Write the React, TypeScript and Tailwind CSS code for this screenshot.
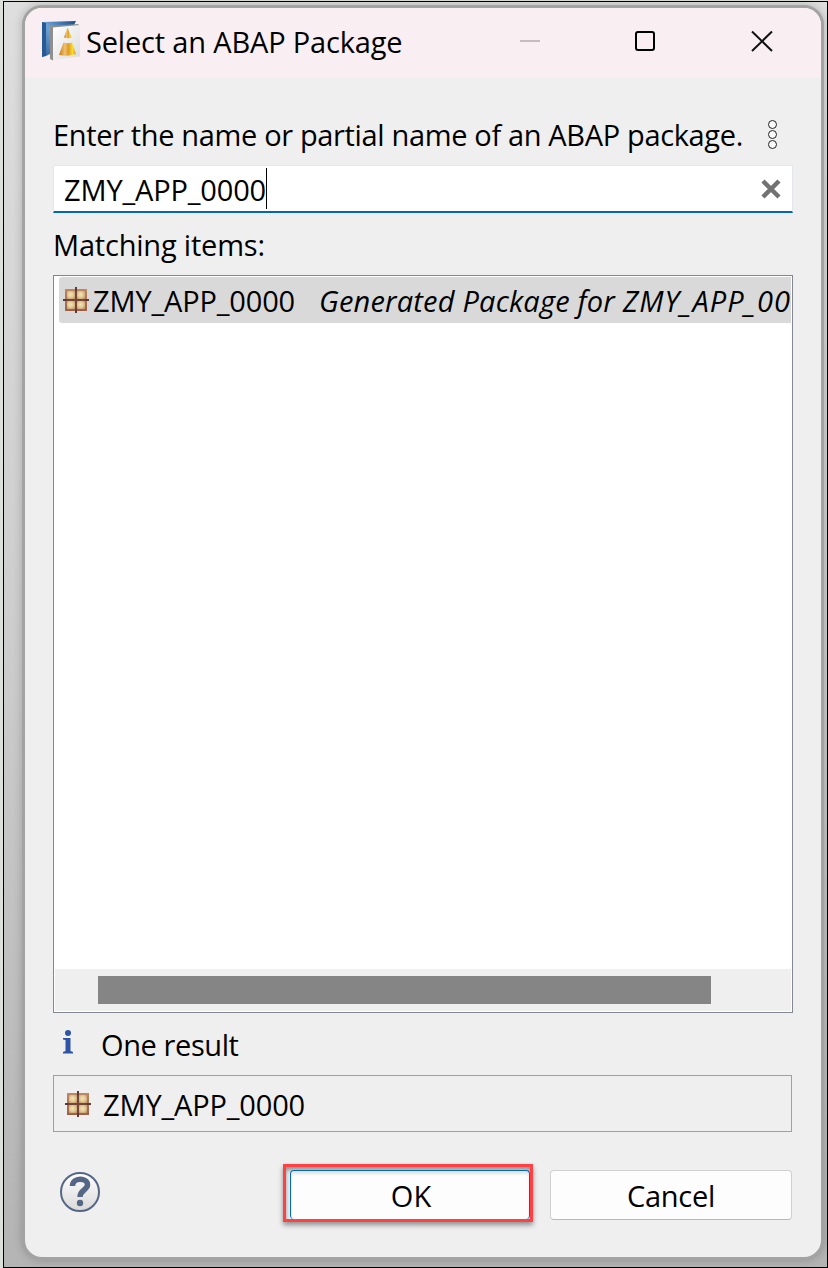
import React from 'react';

function PackageIcon() {
  return (
    <svg width="26" height="26" viewBox="0 0 26 26" className="shrink-0">
      <defs>
        <linearGradient id="box" x1="0" y1="0" x2="0" y2="1">
          <stop offset="0" stopColor="#c08760" />
          <stop offset="1" stopColor="#9c5f47" />
        </linearGradient>
        <radialGradient id="cell" cx=".45" cy=".45" r=".7">
          <stop offset="0" stopColor="#f3e4b2" />
          <stop offset=".5" stopColor="#e3cb98" />
          <stop offset="1" stopColor="#bd9068" />
        </radialGradient>
      </defs>
      <rect x="2" y="2" width="22" height="22" fill="url(#box)" />
      <rect x="4" y="4" width="8" height="8" fill="url(#cell)" />
      <rect x="14" y="4" width="8" height="8" fill="url(#cell)" />
      <rect x="4" y="14" width="8" height="8" fill="url(#cell)" />
      <rect x="14" y="14" width="8" height="8" fill="url(#cell)" />
      <path d="M13 2V24M2 13H24" stroke="#734638" strokeWidth="2" />
      <path d="M13 0V4M13 22V26M0 13H4M22 13H26" stroke="#5d3a36" strokeWidth="2" />
    </svg>
  );
}

function AbapIcon() {
  return (
    <svg width="38" height="40" viewBox="0 0 38 40" className="shrink-0">
      <defs>
        <linearGradient id="blue" x1="0" y1="1" x2="1" y2="0">
          <stop offset="0" stopColor="#2e5f98" />
          <stop offset=".5" stopColor="#6fa4d8" />
          <stop offset="1" stopColor="#174b88" />
        </linearGradient>
        <linearGradient id="gold">
          <stop offset="0" stopColor="#c27a16" />
          <stop offset=".35" stopColor="#f0c272" />
          <stop offset=".55" stopColor="#dc9c28" />
          <stop offset=".8" stopColor="#fbdc2c" />
          <stop offset="1" stopColor="#d8951c" />
        </linearGradient>
        <linearGradient id="sheet" x1="0" y1="0" x2="1" y2="1">
          <stop offset="0" stopColor="#ffffff" />
          <stop offset="1" stopColor="#dcdcdc" />
        </linearGradient>
      </defs>
      <path d="M0 1L34 0L30 8L8 33L4 35L0 36Z" fill="url(#blue)" />
      <path d="M0 1L4 2V34.500L0 36Z" fill="#285a94" />
      <path d="M8 5L36 3L38 5L12 8L11 39.500L8 38Z" fill="#8f8f8f" />
      <path d="M11 6.500L38 4V35.500L11 39Z" fill="url(#sheet)" />
      <path d="M25.500 6.500L29.500 16.500Q25.500 18 22 16.500Z" fill="url(#gold)" />
      <path d="M21.500 21.500Q25.500 23 30 21.500L34 33Q26 36 17 34Z" fill="url(#gold)" />
    </svg>
  );
}

export default function App() {
  return (
    <div className="h-[1268px] w-[828px] overflow-hidden bg-[#dcdfda] pt-px pl-[3px] font-['Open_Sans','Noto_Sans',sans-serif] text-[29px] leading-[40px] text-black">
      <div className="h-[1267px] w-[825px] border border-black bg-linear-to-b from-[#dedede] via-[#cdcdcd] to-[#b4b4b4] pt-[3px] pl-[18px]">
        <div className="h-[1255px] w-[802px] overflow-hidden rounded-[20px] border-3 border-[#a3a3a3] bg-[#efefef] shadow-[0_0_10px_rgba(0,0,0,0.2)]">
          <header className="flex h-[69px] items-start bg-[#f9eff3] pl-[17px]">
            <div className="flex w-[478px] shrink-0 items-start gap-[6px] pt-[13px]">
              <AbapIcon />
              <h1 className="pt-[1px] tracking-[-0.17px] whitespace-nowrap">Select an ABAP Package</h1>
            </div>
            <svg width="260" height="40" viewBox="0 0 260 40" className="mt-[13px]" fill="none">
              <path d="M0 20H20" stroke="#c4bcc0" strokeWidth="2" />
              <rect x="116" y="11" width="18" height="18" rx="2" stroke="#000" strokeWidth="2" />
              <path d="M232 10.500L252 30M252 10.500L232 30" stroke="#111" strokeWidth="2" />
            </svg>
          </header>
          <main className="pl-[28px]">
            <div className="flex h-[88px] w-[740px] items-start justify-between pt-[38px]">
              <label className="tracking-[-0.35px] whitespace-nowrap">Enter the name or partial name of an ABAP package.</label>
              <svg width="10" height="30" viewBox="0 0 10 30" className="mt-[5px] mr-[15px] shrink-0" fill="#fafafa" stroke="#222">
                <circle cx="4.500" cy="4.500" r="4" />
                <circle cx="4.500" cy="14.500" r="4" />
                <circle cx="4.500" cy="24.500" r="4" />
              </svg>
            </div>
            <div className="flex h-[48px] w-[740px] items-center border border-b-2 border-[#e3e7eb] border-b-[#0067c0] bg-white pl-[10px]">
              <span className="pt-[2px] tracking-[-0.15px] whitespace-nowrap">ZMY_APP_0000</span>
              <span className="h-[41px] w-px bg-black" />
              <svg width="20" height="20" viewBox="0 0 20 20" className="mr-[11px] ml-auto">
                <path d="M2 2L18 18M18 2L2 18" stroke="#727272" strokeWidth="4.500" />
              </svg>
            </div>
            <h2 className="h-[62px] pt-[12px] tracking-[-0.2px]">Matching items:</h2>
            <div className="flex h-[738px] w-[740px] flex-col border border-[#828790] bg-white p-px">
              <div className="ml-[4px] flex h-[46px] shrink-0 items-center rounded-l-[3px] bg-[#d9d9d9] pl-[4px] whitespace-nowrap">
                <PackageIcon />
                <span className="ml-[4px] w-[226px] shrink-0 pt-[2px] tracking-[-0.15px]">ZMY_APP_0000</span>
                <em className="pt-[2px] tracking-[0.2px]">
                  Generated Package for <span className="tracking-[1px]">ZMY_APP_00</span>
                </em>
              </div>
              <div className="mt-auto h-[42px] bg-[#efefef] pt-[7px] pl-[43px]">
                <div className="h-[28px] w-[613px] bg-[#858585]" />
              </div>
            </div>
            <div className="flex h-[62px] items-start pt-[12px]">
              <svg width="10" height="24" viewBox="0 0 10 24" className="mt-[5px] ml-[10px]" fill="#2e54a5">
                <circle cx="5" cy="3" r="3" />
                <path d="M0 8H7.500V21L10 22V23.500H0V22L2.500 21V10L0 9.500Z" />
              </svg>
              <span className="ml-[28px] tracking-[-0.4px]">One result</span>
            </div>
            <div className="flex h-[57px] w-[739px] items-center border border-[#a0a0a0] pl-[11px]">
              <PackageIcon />
              <span className="ml-[12px] pt-[2px] tracking-[-0.15px]">ZMY_APP_0000</span>
            </div>
            <footer className="flex h-[125px] items-start pt-[32px]">
              <svg width="42" height="42" viewBox="0 0 42 42" className="mt-[7px] ml-[6px]" fill="none">
                <defs>
                  <linearGradient id="help" x1="0" y1="0" x2="0" y2="1">
                    <stop offset="0" stopColor="#fff" />
                    <stop offset="1" stopColor="#d9d9d9" />
                  </linearGradient>
                </defs>
                <circle cx="21" cy="21" r="19" fill="url(#help)" stroke="#566786" strokeWidth="2" />
                <path d="M13.500 15C13.500 6 28.500 6.500 28.500 13.500C28.500 19.500 21 18.500 21 26" stroke="#566786" strokeWidth="5.500" />
                <circle cx="21" cy="32" r="3.200" fill="#566786" />
              </svg>
              <div className="ml-[182px] h-[58px] w-[250px] border-3 border-[#fe4145] bg-[#efefef] pt-[3px] pl-[4px] shadow-[0_3px_5px_rgba(0,0,0,0.4),inset_0_3px_4px_rgba(0,0,0,0.4)]">
                <button className="block h-[49px] w-[240px] rounded-[4px] border border-b-0 border-[#0067c0] bg-[#fdfdfd] pt-[2px] pl-[2px] shadow-[inset_0_3px_3px_rgba(0,0,0,0.1)]">OK</button>
              </div>
              <button className="mt-[6px] ml-[17px] h-[50px] w-[242px] rounded-[4px] border border-[#d0d0d0] border-b-[#b9b9b9] bg-[#fdfdfd] pt-[2px] tracking-[-0.3px]">Cancel</button>
            </footer>
          </main>
        </div>
      </div>
    </div>
  );
}
